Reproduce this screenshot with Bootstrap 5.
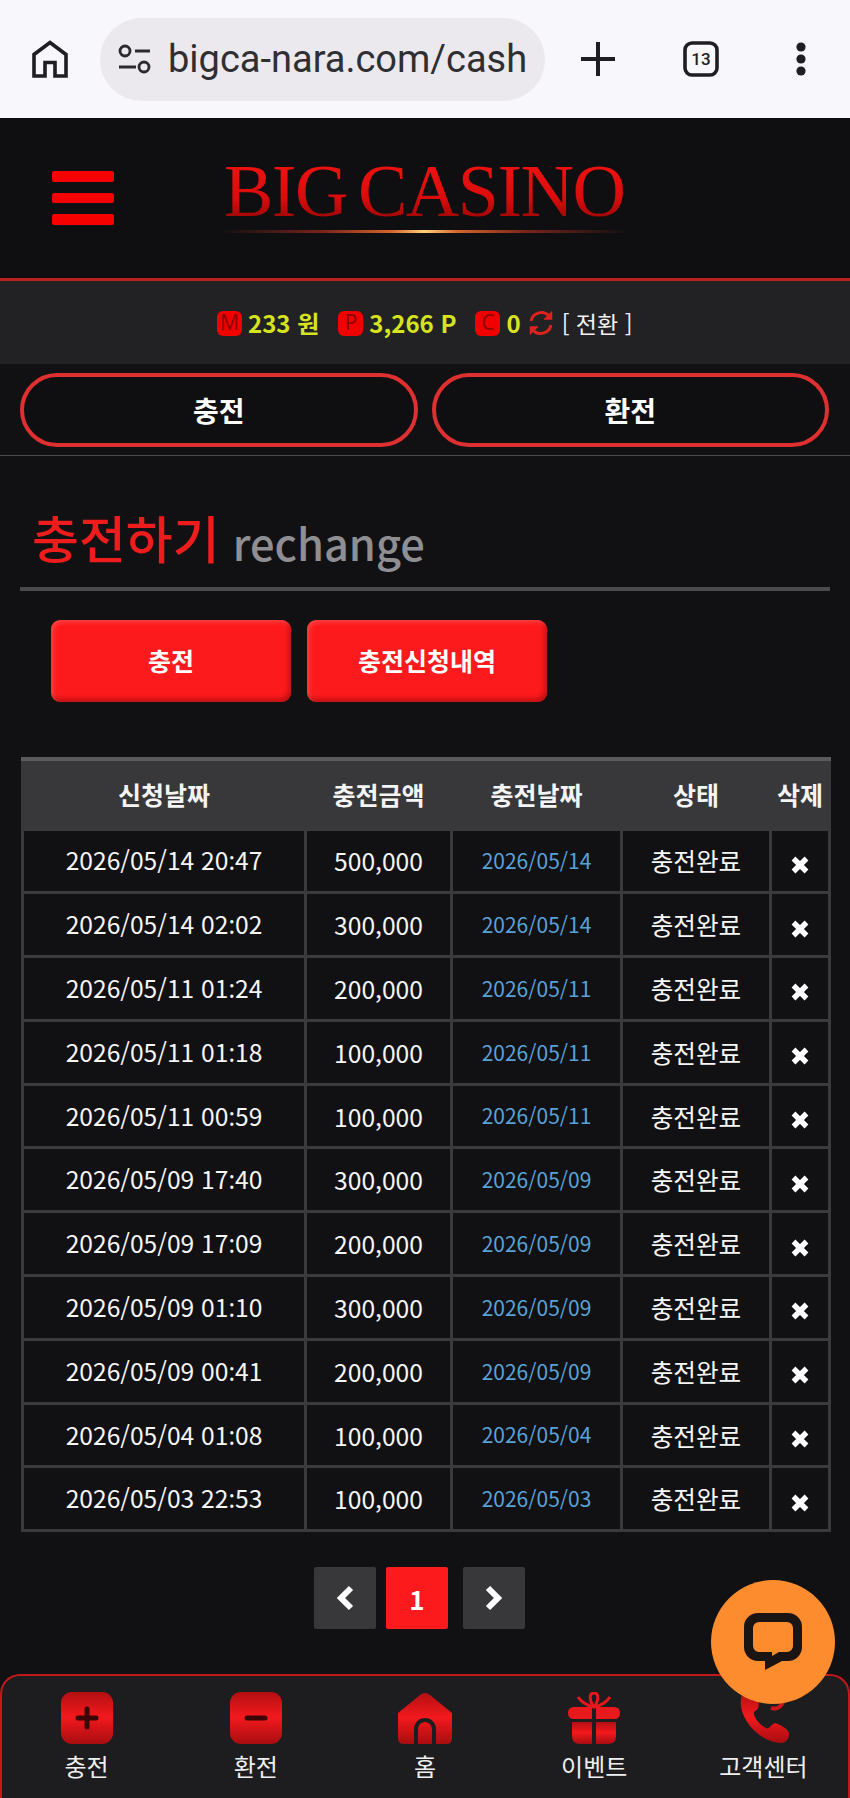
<!DOCTYPE html>
<html lang="ko">
<head>
    <meta charset="UTF-8">
    <meta name="viewport" content="width=device-width, initial-scale=1.0">
    <title>BIG CASINO - 충전하기</title>
    <link href="https://cdn.jsdelivr.net/npm/bootstrap@5.3.0/dist/css/bootstrap.min.css" rel="stylesheet">
    <style>
        html, body { height: 1798px; overflow: hidden; }
        body { background: #111113; color: #fff; font-family: "Noto Sans CJK KR", "Noto Sans", sans-serif; }

        .chrome-bar { height: 118px; background: #f8f7fc; padding-left: 32px; color: #1f1f22; }
        .chrome-url { width: 445px; height: 83px; margin-left: 32px; border-radius: 42px; background: #ebe9ee; padding-left: 18px; }
        .chrome-url span { font-family: "Roboto", sans-serif; font-size: 38px; margin-left: 16px; color: #2f2f33; white-space: nowrap; }
        .chrome-plus { margin-left: 36px; }
        .chrome-tabs { margin-left: 68px; }
        .chrome-dots { margin-left: 76px; }

        .site-head { height: 163px; background: #0f0f11; border-bottom: 3px solid #bb211f; padding-left: 52px; }
        .burger { width: 62px; }
        .burger i { display: block; height: 10.5px; margin-bottom: 11px; background: #f60000; border-radius: 2px; }
        .burger i:last-child { margin-bottom: 0; }
        .logo { width: 401px; margin-left: 110px; margin-top: -4px; }
        .logo-text { font-family: "Liberation Serif", serif; font-size: 74px; line-height: 62px; letter-spacing: -1.5px; word-spacing: -6px; white-space: nowrap;
            background: linear-gradient(180deg, #f01212 0%, #dc0c0c 60%, #960606 100%); -webkit-background-clip: text; background-clip: text; color: transparent; }
        .logo-line { height: 3px; margin-top: 8px; background: linear-gradient(90deg, #111 0%, #7d241c 25%, #d5672f 42%, #ffd27a 50%, #d5672f 58%, #7d241c 75%, #111 100%); }

        .balance-bar { height: 83px; background: #222225; font-size: 24px; font-weight: 700; color: #d6e41f; padding: 1px 0 0 217px; }
        .coin { width: 25px; height: 25px; border-radius: 6px; background: #f20000; color: #8e0404; font-size: 21px; font-weight: 400; font-family: "Noto Sans", sans-serif; }
        .coin-val { margin-left: 6px; margin-right: 19px; white-space: nowrap; }
        .coin-val.last { margin-right: 7px; }
        .swap-link { margin-left: 8px; color: #f2f2f2; font-weight: 400; font-size: 23px; white-space: nowrap; }

        .tab-row { padding: 9px 21px 8px 20px; gap: 14px; border-bottom: 1px solid #47494a; }
        .tab-btn { flex: 1 1 0; height: 74px; border: 4px solid #de3030; border-radius: 37px; background: #0f0f11; color: #fff; font-size: 28px; font-weight: 700; padding: 0; }
        .tab-btn:hover { background: #0f0f11; color: #fff; border-color: #de3030; }

        .page-title { height: 135px; margin: 0 20px; padding-bottom: 12px; border-bottom: 4px solid #4a4a4d; font-size: 51px; font-weight: 500; color: #ee1c1c; padding-left: 12px; }
        .page-title small { font-size: 43.4px; font-weight: 500; color: #8f8f93; margin-left: 13px; }

        .action-row { padding: 29px 0 0 51px; gap: 16px; }
        .action-btn { width: 240px; height: 82px; border: 0; border-radius: 9px; padding: 0; font-size: 25px; font-weight: 700; color: #fff; background: #fd1a1c;
            box-shadow: inset 2px 2px 5px rgba(255,255,255,.2), inset -2px -3px 5px rgba(120,0,0,.5); }
        .action-btn:hover { background: #fd1a1c; color: #fff; }

        .cash-wrap { margin: 55px 0 0 21px; width: 810px; }
        .cash-table { table-layout: fixed; width: 807px; margin: 0; border-collapse: collapse; --bs-table-bg: transparent; --bs-table-color: #fff; }
        .cash-table > thead > tr > th { height: 70px; padding: 0; background: #38383b; border: 3px solid #38383b; border-top: 4px solid #5b5b5e; border-bottom: 2px solid #0f0f11; color: #f4f4f4; font-size: 25px; font-weight: 700; text-align: center; vertical-align: middle; }
        .cash-table > tbody > tr > td { height: 63.8px; padding: 0; border: 3px solid #3a3a3d; background: #111113; color: #f6f6f6; font-size: 24.6px; font-weight: 400; text-align: center; vertical-align: middle; white-space: nowrap; }
        .cash-table .done-date { color: #5aa2d6; font-size: 21px; }
        .time-sep { font-family: "Noto Sans", sans-serif; }
        .col-req { width: 283px; } .col-amt { width: 146px; } .col-date { width: 170px; } .col-state { width: 149px; } .col-del { width: 59px; }

        .pager { margin-top: 35px; padding-left: 314px; }
        .pager-btn { width: 62px; height: 62px; background: #38383a; color: #fff; border-radius: 2px; font-size: 26px; font-weight: 700; }
        .pager-btn.on { background: #fd1a1c; margin: 0 15px 0 10px; }

        .bottom-nav { position: absolute; left: 0; right: 0; top: 1674px; height: 124px; background: #1d1d1f; border: 2px solid #c3171b; border-bottom: 0; border-radius: 20px 20px 0 0; padding-top: 16px; }
        .nav-cell { width: 170px; color: #efefef; font-size: 24px; line-height: 32px; text-decoration: none; }
        .nav-cell svg { display: block; margin-bottom: 6px; }

        .chat-bubble { position: absolute; left: 711px; top: 1580px; width: 124px; height: 124px; border-radius: 50%; background: #fd8c2f; }
    </style>
</head>
<body class="position-relative">
    <div class="chrome-bar d-flex align-items-center">
        <svg width="36" height="38" viewBox="0 0 36 38" fill="none" stroke="#1f1f22" stroke-width="3.6" stroke-linejoin="miter"><path d="M2 36V14.5L18 2.5 34 14.5V36H23V22.5H13V36Z"/></svg>
        <div class="chrome-url d-flex align-items-center">
            <svg width="34" height="30" viewBox="0 0 34 30" fill="none" stroke="#2b2b2f" stroke-width="2.8"><circle cx="7" cy="7" r="5"/><path d="M17 7H32M1 23H18"/><circle cx="26" cy="23" r="5"/></svg>
            <span>bigca-nara.com/cash</span>
        </div>
        <svg class="chrome-plus" width="34" height="34" viewBox="0 0 34 34" stroke="#1f1f22" stroke-width="4"><path d="M17 0V34M0 17H34"/></svg>
        <svg class="chrome-tabs" width="36" height="36" viewBox="0 0 36 36"><rect x="2" y="2" width="32" height="32" rx="7" fill="none" stroke="#1f1f22" stroke-width="3.6"/><text x="18" y="24" text-anchor="middle" font-family="Roboto, sans-serif" font-size="17" font-weight="500" fill="#1f1f22">13</text></svg>
        <svg class="chrome-dots" width="12" height="34" viewBox="0 0 12 34" fill="#1f1f22"><circle cx="6" cy="5" r="4.6"/><circle cx="6" cy="17" r="4.6"/><circle cx="6" cy="29" r="4.6"/></svg>
    </div>

    <header class="site-head d-flex align-items-center">
        <div class="burger"><i></i><i></i><i></i></div>
        <div class="logo">
            <div class="logo-text">BIG CASINO</div>
            <div class="logo-line"></div>
        </div>
    </header>

    <div class="balance-bar d-flex align-items-center">
        <span class="coin d-inline-flex align-items-center justify-content-center">M</span>
        <span class="coin-val">233 원</span>
        <span class="coin d-inline-flex align-items-center justify-content-center">P</span>
        <span class="coin-val">3,266 P</span>
        <span class="coin d-inline-flex align-items-center justify-content-center">C</span>
        <span class="coin-val last">0</span>
        <svg width="26" height="26" viewBox="0 0 26 26" fill="none" stroke="#e0221f" stroke-width="3"><path d="M3 11A10.5 10.5 0 0 1 21.5 6.5"/><path d="M23 15A10.5 10.5 0 0 1 4.5 19.5"/><path d="M23.5 1.5V9H16" fill="#e0221f" stroke-width="1.5"/><path d="M2.5 24.5V17H10" fill="#e0221f" stroke-width="1.5"/></svg>
        <span class="swap-link">[ 전환 ]</span>
    </div>

    <div class="tab-row d-flex">
        <button class="btn tab-btn" type="button">충전</button>
        <button class="btn tab-btn" type="button">환전</button>
    </div>

    <div class="page-title d-flex align-items-end">충전하기 <small>rechange</small></div>

    <div class="action-row d-flex">
        <button class="btn action-btn" type="button">충전</button>
        <button class="btn action-btn" type="button">충전신청내역</button>
    </div>

    <div class="cash-wrap">
        <table class="table cash-table">
            <thead>
                <tr><th class="col-req">신청날짜</th><th class="col-amt">충전금액</th><th class="col-date">충전날짜</th><th class="col-state">상태</th><th class="col-del">삭제</th></tr>
            </thead>
            <tbody id="cash-rows">
                <tr><td>2026/05/14 20<span class="time-sep">:</span>47</td><td>500,000</td><td class="done-date">2026/05/14</td><td>충전완료</td><td><svg width="18" height="18" viewBox="0 0 18 18" stroke="#fff" stroke-width="5.4"><path d="M2.5 2.5 15.5 15.5M15.5 2.5 2.5 15.5"/></svg></td></tr>
                <tr><td>2026/05/14 02<span class="time-sep">:</span>02</td><td>300,000</td><td class="done-date">2026/05/14</td><td>충전완료</td><td><svg width="18" height="18" viewBox="0 0 18 18" stroke="#fff" stroke-width="5.4"><path d="M2.5 2.5 15.5 15.5M15.5 2.5 2.5 15.5"/></svg></td></tr>
                <tr><td>2026/05/11 01<span class="time-sep">:</span>24</td><td>200,000</td><td class="done-date">2026/05/11</td><td>충전완료</td><td><svg width="18" height="18" viewBox="0 0 18 18" stroke="#fff" stroke-width="5.4"><path d="M2.5 2.5 15.5 15.5M15.5 2.5 2.5 15.5"/></svg></td></tr>
                <tr><td>2026/05/11 01<span class="time-sep">:</span>18</td><td>100,000</td><td class="done-date">2026/05/11</td><td>충전완료</td><td><svg width="18" height="18" viewBox="0 0 18 18" stroke="#fff" stroke-width="5.4"><path d="M2.5 2.5 15.5 15.5M15.5 2.5 2.5 15.5"/></svg></td></tr>
                <tr><td>2026/05/11 00<span class="time-sep">:</span>59</td><td>100,000</td><td class="done-date">2026/05/11</td><td>충전완료</td><td><svg width="18" height="18" viewBox="0 0 18 18" stroke="#fff" stroke-width="5.4"><path d="M2.5 2.5 15.5 15.5M15.5 2.5 2.5 15.5"/></svg></td></tr>
                <tr><td>2026/05/09 17<span class="time-sep">:</span>40</td><td>300,000</td><td class="done-date">2026/05/09</td><td>충전완료</td><td><svg width="18" height="18" viewBox="0 0 18 18" stroke="#fff" stroke-width="5.4"><path d="M2.5 2.5 15.5 15.5M15.5 2.5 2.5 15.5"/></svg></td></tr>
                <tr><td>2026/05/09 17<span class="time-sep">:</span>09</td><td>200,000</td><td class="done-date">2026/05/09</td><td>충전완료</td><td><svg width="18" height="18" viewBox="0 0 18 18" stroke="#fff" stroke-width="5.4"><path d="M2.5 2.5 15.5 15.5M15.5 2.5 2.5 15.5"/></svg></td></tr>
                <tr><td>2026/05/09 01<span class="time-sep">:</span>10</td><td>300,000</td><td class="done-date">2026/05/09</td><td>충전완료</td><td><svg width="18" height="18" viewBox="0 0 18 18" stroke="#fff" stroke-width="5.4"><path d="M2.5 2.5 15.5 15.5M15.5 2.5 2.5 15.5"/></svg></td></tr>
                <tr><td>2026/05/09 00<span class="time-sep">:</span>41</td><td>200,000</td><td class="done-date">2026/05/09</td><td>충전완료</td><td><svg width="18" height="18" viewBox="0 0 18 18" stroke="#fff" stroke-width="5.4"><path d="M2.5 2.5 15.5 15.5M15.5 2.5 2.5 15.5"/></svg></td></tr>
                <tr><td>2026/05/04 01<span class="time-sep">:</span>08</td><td>100,000</td><td class="done-date">2026/05/04</td><td>충전완료</td><td><svg width="18" height="18" viewBox="0 0 18 18" stroke="#fff" stroke-width="5.4"><path d="M2.5 2.5 15.5 15.5M15.5 2.5 2.5 15.5"/></svg></td></tr>
                <tr><td>2026/05/03 22<span class="time-sep">:</span>53</td><td>100,000</td><td class="done-date">2026/05/03</td><td>충전완료</td><td><svg width="18" height="18" viewBox="0 0 18 18" stroke="#fff" stroke-width="5.4"><path d="M2.5 2.5 15.5 15.5M15.5 2.5 2.5 15.5"/></svg></td></tr>
            </tbody>
        </table>
    </div>

    <div class="pager d-flex">
        <span class="pager-btn d-flex align-items-center justify-content-center"><svg width="18" height="26" viewBox="0 0 18 26" fill="none" stroke="#fff" stroke-width="6"><path d="M15 3 5 13 15 23"/></svg></span>
        <span class="pager-btn on d-flex align-items-center justify-content-center">1</span>
        <span class="pager-btn d-flex align-items-center justify-content-center"><svg width="18" height="26" viewBox="0 0 18 26" fill="none" stroke="#fff" stroke-width="6"><path d="M3 3 13 13 3 23"/></svg></span>
    </div>

    <nav class="bottom-nav d-flex justify-content-between">
        <a class="nav-cell d-flex flex-column align-items-center" href="#">
            <svg width="52" height="52" viewBox="0 0 52 52">
                <defs><linearGradient id="navRed" x1="0" y1="0" x2="0" y2="1"><stop offset="0" stop-color="#b30f12"/><stop offset=".48" stop-color="#f3191d"/><stop offset="1" stop-color="#a80d10"/></linearGradient></defs>
                <rect width="52" height="52" rx="11" fill="url(#navRed)"/><path d="M26 17V35M17 26H35" stroke="#3d0506" stroke-width="5" stroke-linecap="round"/>
            </svg>충전</a>
        <a class="nav-cell d-flex flex-column align-items-center" href="#">
            <svg width="52" height="52" viewBox="0 0 52 52"><rect width="52" height="52" rx="11" fill="url(#navRed)"/><path d="M17 26H35" stroke="#3d0506" stroke-width="5" stroke-linecap="round"/></svg>환전</a>
        <a class="nav-cell d-flex flex-column align-items-center" href="#">
            <svg width="54" height="52" viewBox="0 0 54 52"><path d="M22 3Q27-1 32 3L54 21V46Q54 52 48 52H6Q0 52 0 46V21Z" fill="url(#navRed)"/><path d="M18 52V37A9 9 0 0 1 36 37V52" fill="none" stroke="#1d1d1f" stroke-width="4"/></svg>홈</a>
        <a class="nav-cell d-flex flex-column align-items-center" href="#">
            <svg width="52" height="52" viewBox="0 0 52 52"><path d="M26 15C18 14 12 8 10 5M26 15C21 8 21 1 26 1S31 8 26 15ZM26 15C34 14 40 8 42 5" fill="none" stroke="#e5181c" stroke-width="3"/><path d="M6 15H24V27H6Q0 27 0 21T6 15ZM28 15H46Q52 15 52 21T46 27H28Z" fill="#e8191d"/><path d="M4 30H24V52H12Q4 52 4 44ZM28 30H48V44Q48 52 40 52H28Z" fill="url(#navRed)"/></svg>이벤트</a>
        <a class="nav-cell d-flex flex-column align-items-center" href="#">
            <svg width="52" height="52" viewBox="0 0 52 52"><path d="M5 2C-2 22 20 50 44 51 50 51 53 44 52 41 50 36 44 33 38 31 33 33 32 38 29 36 21 32 16 24 17 20 21 17 23 15 21 8 19 2 10-3 5 2Z" fill="url(#navRed)"/><path d="M34 16A9 9 0 0 0 46 6" fill="none" stroke="#c9171b" stroke-width="4"/></svg>고객센터</a>
    </nav>

    <a class="chat-bubble d-flex align-items-center justify-content-center" href="#">
        <svg width="58" height="58" viewBox="0 0 58 58"><path fill="#1a1512" fill-rule="evenodd" d="M14 0H44A14 14 0 0 1 58 14V34A14 14 0 0 1 44 48H38L21 57V48H14A14 14 0 0 1 0 34V14A14 14 0 0 1 14 0ZM15 9A6 6 0 0 0 9 15V33A6 6 0 0 0 15 39H28V43L35 39H43A6 6 0 0 0 49 33V15A6 6 0 0 0 43 9Z"/></svg>
    </a>

    <script src="https://cdn.jsdelivr.net/npm/bootstrap@5.3.0/dist/js/bootstrap.bundle.min.js"></script>
</body>
</html>
